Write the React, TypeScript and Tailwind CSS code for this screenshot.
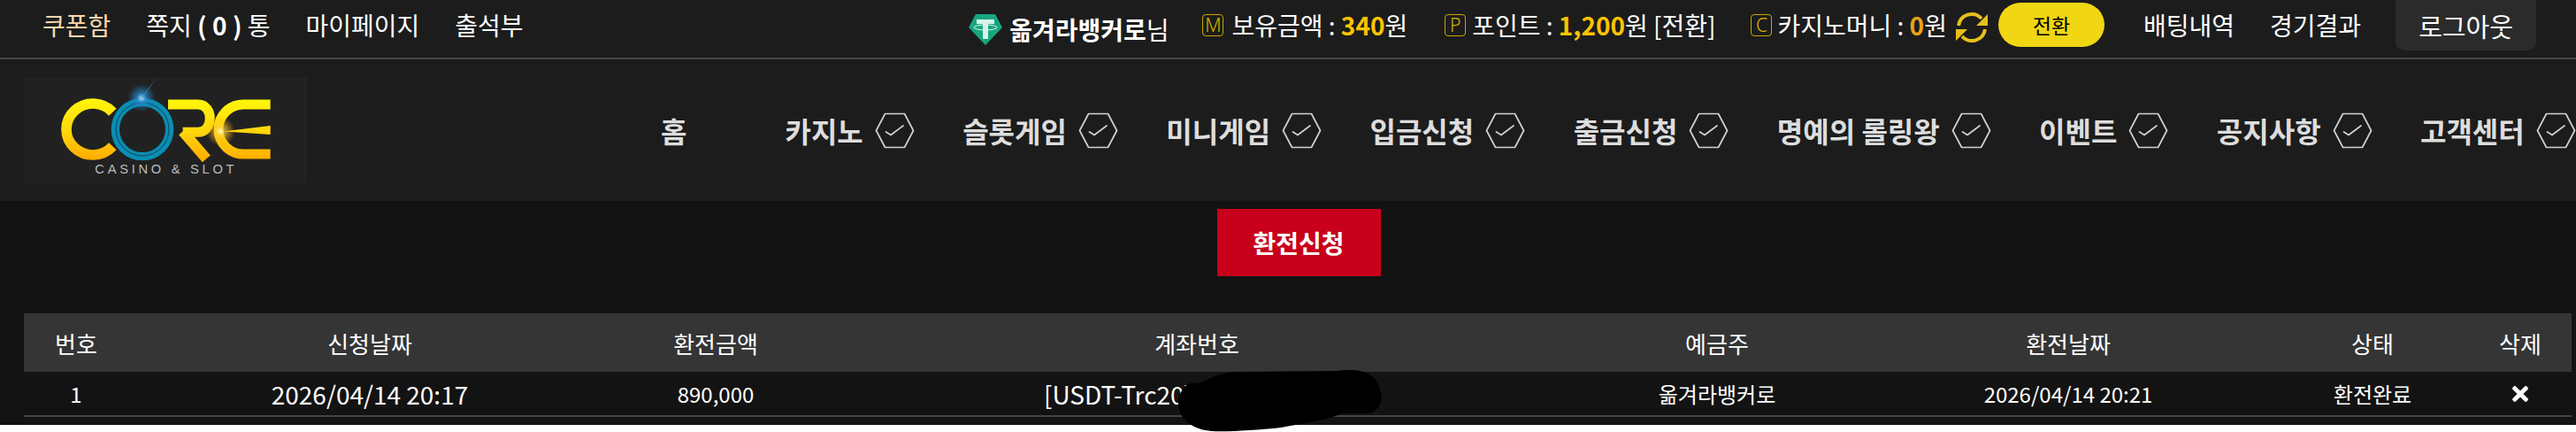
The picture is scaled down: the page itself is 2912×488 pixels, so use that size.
import { FaTimes } from 'react-icons/fa';

const navItems = ['카지노', '슬롯게임', '미니게임', '입금신청', '출금신청', '명예의 롤링왕', '이벤트', '공지사항', '고객센터'];

function HexCheck() {
  return (
    <svg width="45" height="41" viewBox="0 0 45 41" fill="none" stroke="#d2d2d2" strokeLinejoin="round" strokeLinecap="round" className="shrink-0">
      <path d="M1.5 20.5 L11.5 1.5 H33.5 L43.5 20.5 L33.5 39.5 H11.5 Z" strokeWidth="1.7" />
      <path d="M12.5 22 L18 25.5 L32 15" strokeWidth="1.7" />
    </svg>
  );
}

function Tether() {
  return (
    <svg width="38" height="35" viewBox="0 0 38 35" className="shrink-0">
      <path d="M8 0 H30 L38 15 L19 35 L0 15 Z" fill="#17a67f" />
      <path d="M9 6 H29 V11 H22 V28 H16 V11 H9 Z" fill="#d8f3ea" />
      <ellipse cx="19" cy="15" rx="13" ry="3" fill="none" stroke="#d8f3ea" strokeWidth="1" />
    </svg>
  );
}

function CoinBadge({ letter }: { letter: string }) {
  return (
    <span className="flex h-[25px] w-[24px] shrink-0 items-center justify-center rounded-[4px] border-[1.5px] border-[#c9a800] font-['Noto_Sans'] text-[21px] font-light leading-none text-[#d9b400]">
      {letter}
    </span>
  );
}

function RefreshIcon() {
  return (
    <svg width="36" height="36" viewBox="0 0 36 36" className="shrink-0" fill="none" stroke="#e6c01c" strokeWidth="4">
      <path d="M3 16 A15 15 0 0 1 29 8" />
      <path d="M33 20 A15 15 0 0 1 7 28" />
      <path d="M36 3 V16 H23 Z M0 33 V20 H13 Z" fill="#e6c01c" stroke="none" />
    </svg>
  );
}

// logo artwork, coordinates taken from a 3x crop
function Logo() {
  return (
    <svg width="320" height="120" viewBox="21 21 960 360" className="block">
      <defs>
        <linearGradient id="gold" gradientUnits="userSpaceOnUse" x1="0" y1="98" x2="0" y2="298">
          <stop offset="0" stopColor="#fff60a" />
          <stop offset="0.55" stopColor="#ffd60a" />
          <stop offset="1" stopColor="#ffae00" />
        </linearGradient>
        <radialGradient id="blueGlow">
          <stop offset="0" stopColor="#bfe9ff" />
          <stop offset="0.3" stopColor="#2b8fd0" stopOpacity="0.8" />
          <stop offset="1" stopColor="#1a6fa8" stopOpacity="0" />
        </radialGradient>
        <radialGradient id="goldGlow">
          <stop offset="0" stopColor="#fffbd0" />
          <stop offset="0.3" stopColor="#ffd23a" stopOpacity="0.7" />
          <stop offset="1" stopColor="#ffb000" stopOpacity="0" />
        </radialGradient>
      </defs>
      <g fill="none" stroke="url(#gold)" strokeWidth="33">
        <path d="M322 140 A90 87 0 1 0 322 256" strokeWidth="35" />
        <path d="M510 114 H612 C665 114 665 208 612 208 H560" />
        <path d="M560 205 L640 298" strokeWidth="36" />
        <path d="M857 114 H765 A84 84 0 0 0 765 282 H857" />
      </g>
      <path d="M700 205 L857 186 V216 Z" fill="url(#gold)" />
      <circle cx="423" cy="198" r="92" fill="none" stroke="#0a8db4" strokeWidth="28" />
      <circle cx="423" cy="198" r="90" fill="none" stroke="#16333d" strokeWidth="2.5" />
      <circle cx="420" cy="92" r="48" fill="url(#blueGlow)" />
      <path d="M470 25 L426 90 L414 96 Z" fill="#3c8fc0" opacity="0.6" />
      <circle cx="688" cy="205" r="50" fill="url(#goldGlow)" />
      <text x="262" y="349" fontFamily="'Liberation Sans', sans-serif" fontSize="44" letterSpacing="6.5" fill="#bdbdbd" textLength="478">
        CASINO &amp; SLOT
      </text>
    </svg>
  );
}

export default function App() {
  return (
    <div className="relative h-[488px] w-[2912px] overflow-hidden bg-white font-['Noto_Sans_CJK_KR',sans-serif] text-white">
      {/* top bar */}
      <div className="flex h-[65px] items-start justify-between bg-[#1c1c1c] pl-[48px] pr-[45px] text-[28px] leading-[40px]">
        <div className="flex gap-[40px] pt-[8px]">
          <span className="text-[#fcd8ae]">쿠폰함</span>
          <span>쪽지 <b>( 0 )</b> 통</span>
          <span>마이페이지</span>
          <span>출석부</span>
        </div>
        <div className="flex items-start">
          <div className="flex items-center pt-[13px]">
            <Tether />
            <span className="ml-[8px] font-bold">옮겨라뱅커로</span>
            <span>님</span>
          </div>
          <div className="ml-[38px] flex items-center gap-[9px] pt-[8px]">
            <CoinBadge letter="M" />
            <span>보유금액 : <b className="text-[#ffc400]">340</b>원</span>
          </div>
          <div className="ml-[42px] flex items-center gap-[7px] pt-[8px]">
            <CoinBadge letter="P" />
            <span>포인트 : <b className="text-[#ffc400]">1,200</b>원 [전환]</span>
          </div>
          <div className="ml-[40px] flex items-center gap-[6px] pt-[8px]">
            <CoinBadge letter="C" />
            <span>카지노머니 : <b className="text-[#e8a317]">0</b>원</span>
          </div>
          <div className="ml-[10px] pt-[13px]">
            <RefreshIcon />
          </div>
          <button className="ml-[12px] mt-[3px] h-[50px] w-[120px] rounded-full bg-[#f0d613] text-[23px] text-black">전환</button>
          <span className="ml-[44px] pt-[8px]">배팅내역</span>
          <span className="ml-[40px] pt-[8px]">경기결과</span>
          <button className="ml-[39px] h-[57px] w-[159px] rounded-b-[10px] bg-[#2b2b2b] text-[29px]">로그아웃</button>
        </div>
      </div>
      <div className="h-[2px] bg-[#444444]" />

      {/* nav */}
      <div className="flex h-[160px] items-center bg-[#1c1c1c] pl-[27px]">
        <div className="h-[120px] w-[320px] bg-[#212121]">
          <Logo />
        </div>
        <nav className="ml-[400px] flex items-center text-[32px] font-bold text-[#dddddd]">
          <span className="mr-[111px]">홈</span>
          {navItems.map((label) => (
            <div key={label} className="mr-[54.4px] flex items-center gap-[13px] whitespace-nowrap">
              <span>{label}</span>
              <HexCheck />
            </div>
          ))}
        </nav>
      </div>

      {/* content */}
      <div className="h-[253px] bg-[#131313] pt-[9px]">
        <div className="flex justify-center pl-[24px]">
          <button className="h-[76px] w-[185px] bg-[#c8001b] text-[28px] font-bold">환전신청</button>
        </div>
        <div className="ml-[27px] mt-[42px] w-[2880px]">
          <table className="w-full table-fixed border-b-2 border-[#444444] text-center">
            <colgroup>
              <col className="w-[118px]" />
              <col className="w-[546px]" />
              <col className="w-[236px]" />
              <col className="w-[852px]" />
              <col className="w-[324px]" />
              <col className="w-[470px]" />
              <col className="w-[218px]" />
              <col className="w-[116px]" />
            </colgroup>
            <thead>
              <tr className="h-[66px] bg-[#353535] text-[26px] font-normal">
                <th className="font-normal">번호</th>
                <th className="font-normal">신청날짜</th>
                <th className="font-normal">환전금액</th>
                <th className="font-normal">계좌번호</th>
                <th className="font-normal">예금주</th>
                <th className="font-normal">환전날짜</th>
                <th className="font-normal">상태</th>
                <th className="font-normal">삭제</th>
              </tr>
            </thead>
            <tbody>
              <tr className="h-[50px] text-[24px] leading-none">
                <td>1</td>
                <td className="text-[28px]">2026/04/14 20:17</td>
                <td>890,000</td>
                <td className="pl-[253px] text-left text-[28px]">[USDT-Trc20]</td>
                <td>옮겨라뱅커로</td>
                <td>2026/04/14 20:21</td>
                <td>환전완료</td>
                <td>
                  <FaTimes className="mx-auto" size={26} />
                </td>
              </tr>
            </tbody>
          </table>
        </div>
      </div>

      {/* marker scribble over the account number */}
      <svg width="236" height="72" viewBox="0 0 236 72" className="absolute left-[1328px] top-[416px]">
        <path d="M4 37 C6 24 14 14 24 17 C32 17 46 6 67 4 L182 3 C205 1 226 0 233 27 C236 40 228 49 220 51 L189 51 C170 60 144 62 120 67 C90 70 60 72 42 71 C20 70 2 56 4 37 Z" fill="#000" />
      </svg>
    </div>
  );
}
